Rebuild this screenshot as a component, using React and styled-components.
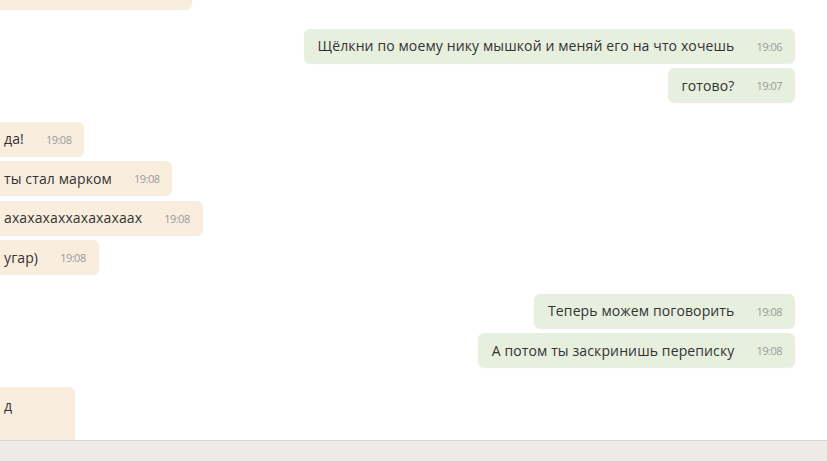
import React from 'react'
import styled, { createGlobalStyle } from 'styled-components'

const Global = createGlobalStyle`
    html, body {
        margin: 0;
        padding: 0;
        background: #ffffff;
        overflow: hidden;
    }
    body {
        font-family: "Open Sans", "Noto Sans", "DejaVu Sans", sans-serif;
    }
`

const Page = styled.div`
    width: 827px;
    height: 461px;
    display: flex;
    flex-direction: column;
`

const Messages = styled.div`
    height: 440px;
    overflow: hidden;
    display: flex;
    flex-direction: column;
    padding-right: 32px;
`

const Group = styled.div`
    display: flex;
    flex-direction: column;
    gap: 5.5px;
    align-items: ${({out}) => (out ? 'flex-end' : 'flex-start')};
    margin-top: ${({first}) => (first ? '-71px' : '19.5px')};
`

const Bubble = styled.div`
    display: flex;
    align-items: ${({tall}) => (tall ? 'flex-start' : 'center')};
    gap: 22px;
    box-sizing: border-box;
    width: ${({w}) => (w ? `${w}px` : 'auto')};
    height: ${({tall}) => (tall ? '80px' : '34px')};
    min-width: ${({tall}) => (tall ? '85px' : '0')};
    padding: ${({tall}) => (tall ? '9px 13px 0 14px' : '0 13px 0 14px')};
    margin-left: ${({out}) => (out ? '0' : '-10px')};
    background: ${({out}) => (out ? '#e7efdf' : '#f9edde')};
    border-radius: 6px;
    box-shadow: 0 1px 1px rgba(0, 0, 0, 0.08);
`

const Text = styled.span`
    font-size: 14px;
    line-height: 19px;
    letter-spacing: 0.12px;
    color: #333333;
    white-space: nowrap;
`

const Time = styled.span`
    font-size: 11px;
    line-height: 19px;
    color: #9a9a9a;
    letter-spacing: -0.5px;
    padding-top: 1px;
`

const Footer = styled.div`
    flex: 1;
    background: #ecebe8;
    border-top: 1px solid #d6d6d6;
`

const groups = [
    { out: true, items: [
        ['Щёлкни по моему нику мышкой и меняй его на что хочешь', '19:06'],
        ['готово?', '19:07'],
    ] },
    { out: false, items: [
        ['да!', '19:08'],
        ['ты стал марком', '19:08'],
        ['ахахахаххахахахаах', '19:08'],
        ['угар)', '19:08'],
    ] },
    { out: true, items: [
        ['Теперь можем поговорить', '19:08'],
        ['А потом ты заскринишь переписку', '19:08'],
    ] },
]

function App() {
    return (
        <>
            <Global />
            <Page>
                <Messages>
                    {/* previous message, scrolled mostly out of view */}
                    <Group first>
                        <Bubble tall w={202} />
                    </Group>
                    {groups.map((g, i) => (
                        <Group key={i} out={g.out}>
                            {g.items.map(([text, time], j) => (
                                <Bubble key={j} out={g.out}>
                                    <Text>{text}</Text>
                                    <Time>{time}</Time>
                                </Bubble>
                            ))}
                        </Group>
                    ))}
                    <Group>
                        <Bubble tall>
                            <Text>д</Text>
                        </Bubble>
                    </Group>
                </Messages>
                <Footer />
            </Page>
        </>
    )
}

export default App
